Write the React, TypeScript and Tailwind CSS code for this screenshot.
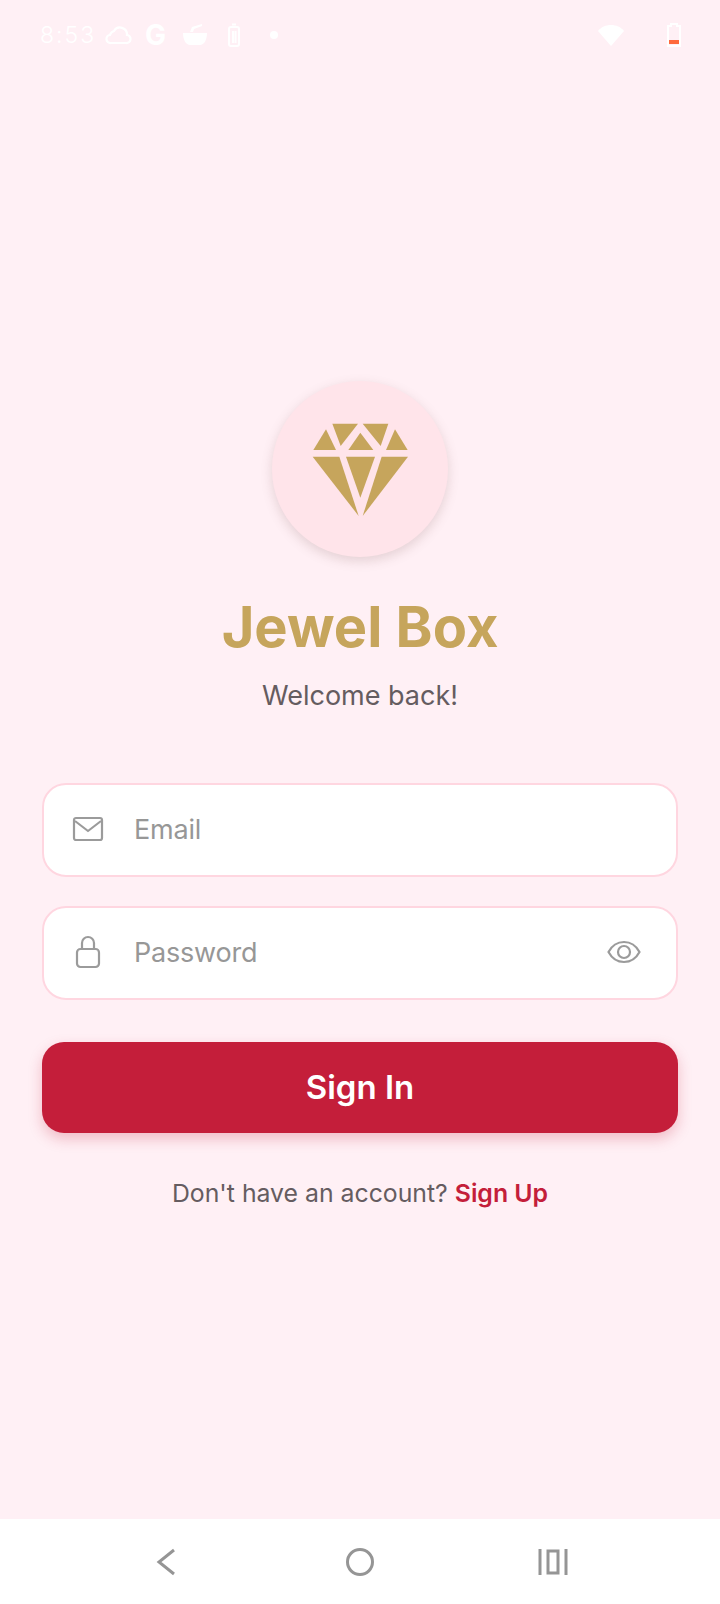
import React from 'react';

const font = { fontFamily: 'Inter, "Noto Sans", sans-serif' };

function Diamond() {
  return (
    <svg width="100" height="97" viewBox="180 180 300 291" fill="#c6a55c">
      <polygon points="247,188 324,188 272,255" />
      <polygon points="338,188 415,188 392,255" />
      <polygon points="331,215 370,267 295,267" />
      <polygon points="228,205 258,267 190,267" />
      <polygon points="435,205 473,267 408,267" />
      <polygon points="188,287 268,287 326,465" />
      <polygon points="288,287 375,287 331,410" />
      <polygon points="395,287 474,287 338,465" />
    </svg>
  );
}

function StatusBar() {
  return (
    <div className="flex h-[70px] items-center justify-between pl-[40px] pr-[38px] text-white">
      <div className="flex items-center">
        <span className="w-[64px] text-[23px] font-light tracking-[2px] leading-none">8:53</span>
        <svg width="28" height="22" viewBox="0 0 28 22" fill="none" stroke="white" strokeWidth="2.2">
          <path d="M7 19h15a4 4 0 0 0 1-8 7 7 0 0 0-13-4 6 6 0 0 0-4 4 4 4 0 0 0 1 8z" />
        </svg>
        <span className="ml-[13px] w-[24px] text-[28px] font-bold leading-none">G</span>
        <svg width="26" height="24" viewBox="0 0 26 24" fill="white" className="ml-[13px]">
          <path d="M1 10h24c0 7-3 12-7 12H8c-4 0-7-5-7-12z" />
          <path d="M8 9l2-5 10-3v2l-8 3-1 3z" />
        </svg>
        <svg width="14" height="24" viewBox="0 0 14 24" fill="none" stroke="white" strokeWidth="2" className="ml-[19px]">
          <rect x="2" y="4" width="10" height="19" rx="2" />
          <path d="M5 1.500h4M6 8v12M8.500 8v12" />
        </svg>
        <span className="ml-[29px] h-[8px] w-[8px] rounded-full bg-white" />
      </div>
      <div className="flex items-center">
        <svg width="26" height="21" viewBox="0 0 26 21" fill="white">
          <path d="M0 6C3 2 8 0 13 0s10 2 13 6L13 21z" />
        </svg>
        <svg width="16" height="24" viewBox="0 0 16 24" className="ml-[42px]">
          <path d="M5 1h6v2h3v20H2V3h3z" fill="none" stroke="white" strokeWidth="2" />
          <rect x="3" y="17" width="10" height="4" fill="#ff6a3d" />
        </svg>
      </div>
    </div>
  );
}

function Field({ icon, label, trailing }: { icon: React.ReactNode; label: string; trailing?: React.ReactNode }) {
  return (
    <div className="flex h-[94px] items-center rounded-[24px] border-2 border-[#ffd6e0] bg-white pb-[2px]">
      <div className="flex w-[90px] shrink-0 justify-center pr-[2px]">{icon}</div>
      <span className="flex-1 text-[27px] leading-none tracking-[-0.2px] text-[#979797]">{label}</span>
      {trailing && <div className="pr-[35px]">{trailing}</div>}
    </div>
  );
}

export default function App() {
  return (
    <div className="flex h-[1604px] w-[720px] flex-col overflow-hidden bg-[#fff0f5]" style={font}>
      <StatusBar />

      <main className="flex flex-1 flex-col items-center px-[42px] pt-[311px]">
        <div className="flex h-[176px] w-[176px] items-center justify-center rounded-full bg-[#ffe4ea] shadow-[0_4px_12px_rgba(120,80,80,0.2)]">
          <Diamond />
        </div>
        <h1 className="mt-[36px] text-[56px] font-bold leading-[68px] text-[#c6a55c]">Jewel Box</h1>
        <p className="mt-[18px] text-[27px] leading-[34px] text-[#655c60]">Welcome back!</p>

        <div className="mt-[70px] flex w-full flex-col gap-[29px]">
          <Field
            label="Email"
            icon={
              <svg width="32" height="26" viewBox="0 0 32 26" fill="none" stroke="#9b9b9b" strokeWidth="2.2" strokeLinejoin="round">
                <rect x="2" y="2" width="28" height="22" rx="2" />
                <path d="M3 5l13 10L29 5" />
              </svg>
            }
          />
          <Field
            label="Password"
            icon={
              <svg width="26" height="34" viewBox="0 0 26 34" fill="none" stroke="#9b9b9b" strokeWidth="2.2">
                <rect x="2" y="14" width="22" height="18" rx="3.500" />
                <path d="M7 14V8a6 6 0 0 1 12 0v6" />
              </svg>
            }
            trailing={
              <svg width="34" height="24" viewBox="0 0 34 24" fill="none" stroke="#9b9b9b" strokeWidth="2.2">
                <path d="M1.500 12C5 5.500 10.500 2 17 2s12 3.500 15.500 10C29 18.500 23.500 22 17 22S5 18.500 1.500 12z" />
                <circle cx="17" cy="12" r="6" />
              </svg>
            }
          />
        </div>

        <button className="mt-[42px] flex h-[91px] w-full items-center justify-center rounded-[22px] bg-[#c41e3a] text-[33px] font-semibold text-white shadow-[0_6px_14px_rgba(196,30,58,0.25)]">
          Sign In
        </button>

        <p className="mt-[44px] text-[24.800px] leading-[32px] text-[#655c60]">
          Don't have an account? <span className="font-semibold text-[#c41e3a]">Sign Up</span>
        </p>
      </main>

      <nav className="flex h-[85px] items-center justify-between bg-white pl-[151px] pr-[152px]">
        <div className="flex w-[30px] justify-center">
          <svg width="20" height="28" viewBox="0 0 20 28" fill="none" stroke="#959595" strokeWidth="3">
            <path d="M18 2L3 14l15 12" />
          </svg>
        </div>
        <svg width="30" height="30" viewBox="0 0 30 30" fill="none" stroke="#959595" strokeWidth="3">
          <circle cx="15" cy="15" r="12.500" />
        </svg>
        <svg width="30" height="26" viewBox="0 0 30 26" fill="none" stroke="#959595" strokeWidth="3">
          <path d="M2 0v26M28 0v26" />
          <rect x="10" y="2" width="10" height="22" />
        </svg>
      </nav>
    </div>
  );
}
